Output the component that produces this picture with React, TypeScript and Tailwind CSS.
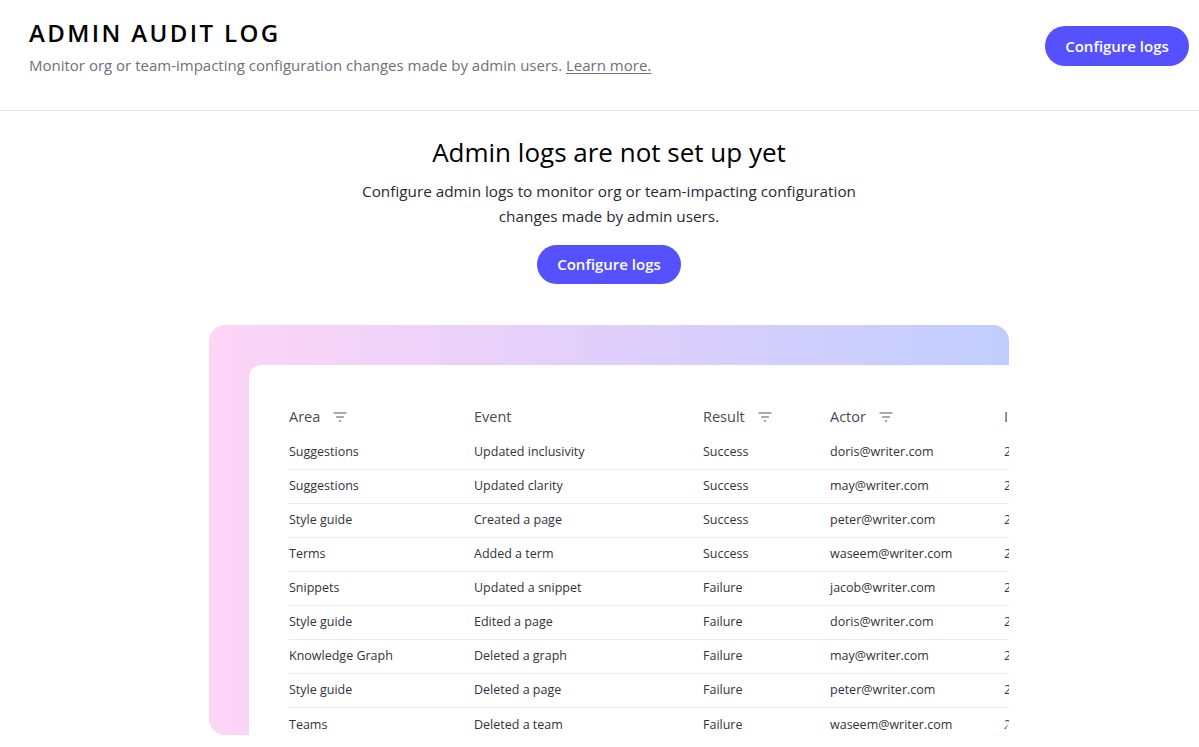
import React from 'react'

const font = { fontFamily: '"Open Sans", "Liberation Sans", sans-serif' }

interface LogRow {
  area: string
  event: string
  result: string
  actor: string
  date: string
}

const rows: LogRow[] = [
  { area: 'Suggestions', event: 'Updated inclusivity', result: 'Success', actor: 'doris@writer.com', date: '2022-11-04' },
  { area: 'Suggestions', event: 'Updated clarity', result: 'Success', actor: 'may@writer.com', date: '2022-11-04' },
  { area: 'Style guide', event: 'Created a page', result: 'Success', actor: 'peter@writer.com', date: '2022-11-03' },
  { area: 'Terms', event: 'Added a term', result: 'Success', actor: 'waseem@writer.com', date: '2022-11-03' },
  { area: 'Snippets', event: 'Updated a snippet', result: 'Failure', actor: 'jacob@writer.com', date: '2022-11-02' },
  { area: 'Style guide', event: 'Edited a page', result: 'Failure', actor: 'doris@writer.com', date: '2022-11-02' },
  { area: 'Knowledge Graph', event: 'Deleted a graph', result: 'Failure', actor: 'may@writer.com', date: '2022-11-01' },
  { area: 'Style guide', event: 'Deleted a page', result: 'Failure', actor: 'peter@writer.com', date: '2022-11-01' },
  { area: 'Teams', event: 'Deleted a team', result: 'Failure', actor: 'waseem@writer.com', date: '2022-10-31' },
]

function FilterIcon() {
  return (
    <svg width="14" height="12" viewBox="0 0 14 12" fill="none" stroke="#55555f" strokeWidth="1.2" strokeLinecap="round">
      <path d="M1 2h12M3.5 6h7M6.3 10h1.4" />
    </svg>
  )
}

function HeaderCell({ label, width, filter }: { label: string; width: string; filter?: boolean }) {
  return (
    <div className={`flex items-center gap-[13px] shrink-0 ${width}`}>
      <span>{label}</span>
      {filter && <FilterIcon />}
    </div>
  )
}

export default function App() {
  return (
    <div className="min-h-screen bg-white text-[#1b1b22]" style={font}>
      {/* Page header */}
      <header className="flex h-[111px] items-start justify-between border-b border-[#e4e4ec] pl-[29px] pr-[10px] pt-[17px]">
        <div>
          <h1 className="text-[24px] font-semibold leading-[32px] tracking-[0.1em] text-black">ADMIN AUDIT LOG</h1>
          <p className="mt-[5px] text-[15px] text-[#707078]">
            Monitor org or team-impacting configuration changes made by admin users.{' '}
            <a href="#" className="underline underline-offset-2">Learn more.</a>
          </p>
        </div>
        <button className="mt-[9px] h-[40px] w-[144px] rounded-full bg-[#5551ff] text-[15px] font-semibold text-white">
          Configure logs
        </button>
      </header>

      {/* Empty state */}
      <main className="ml-[19px] flex flex-col items-center pt-[23px]">
        <h2 className="text-[26px] font-medium leading-[36px] text-black">Admin logs are not set up yet</h2>
        <p className="mt-[9px] w-[510px] text-center text-[15.3px] leading-[25px] text-[#2a2a30]">
          Configure admin logs to monitor org or team-impacting configuration changes made by admin users.
        </p>
        <button className="mt-[16px] h-[39px] w-[144px] rounded-full bg-[#5551ff] text-[15px] font-semibold text-white">
          Configure logs
        </button>

        {/* Preview card */}
        <div className="mt-[41px] h-[410px] w-[800px] overflow-hidden rounded-[16px] bg-linear-to-r from-[#fdd5f6] via-[#e0cffb] to-[#bfcdfe] pl-[40px] pt-[40px]">
          <div className="h-full w-[900px] rounded-tl-[12px] bg-white pl-[40px] pt-[32px]">
            <div className="flex h-[39px] items-center text-[14.5px] text-[#4a4a52]">
              <HeaderCell label="Area" width="w-[185px]" filter />
              <HeaderCell label="Event" width="w-[229px]" />
              <HeaderCell label="Result" width="w-[127px]" filter />
              <HeaderCell label="Actor" width="w-[174px]" filter />
              <HeaderCell label="IP address" width="w-[140px]" />
            </div>
            {rows.map((r, i) => (
              <div
                key={i}
                className={`flex h-[34px] items-center text-[12.5px] text-[#33333a] ${i < rows.length - 1 ? 'border-b border-[#ececf0]' : ''}`}
              >
                <span className="w-[185px] shrink-0">{r.area}</span>
                <span className="w-[229px] shrink-0">{r.event}</span>
                <span className="w-[127px] shrink-0">{r.result}</span>
                <span className="w-[174px] shrink-0">{r.actor}</span>
                <span className="w-[140px] shrink-0">{r.date}</span>
              </div>
            ))}
          </div>
        </div>
      </main>
    </div>
  )
}
